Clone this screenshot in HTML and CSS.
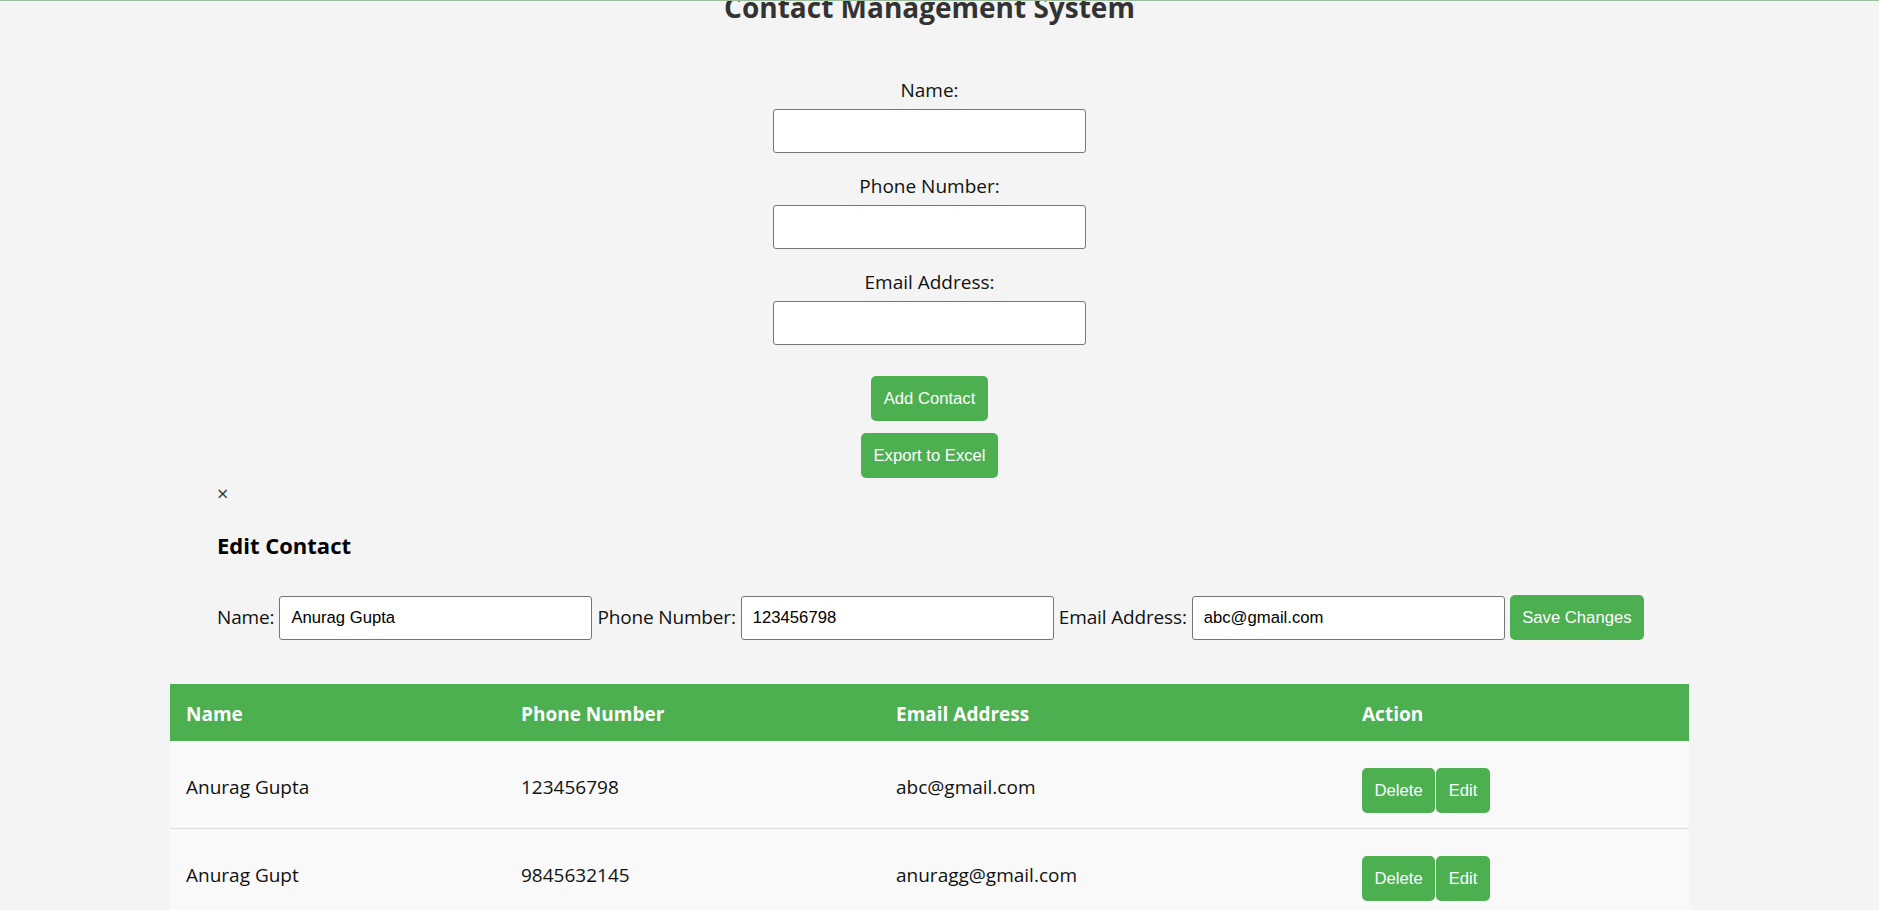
FILE: index.html
```html
<!DOCTYPE html>
<html lang="en">
<head>
<meta charset="UTF-8">
<title>Contact Management System</title>
<link rel="stylesheet" href="styles.css">
</head>
<body>
<div class="page">
  <h1 class="title">Contact Management System</h1>

  <form class="add-form">
    <div class="field">
      <label class="field-label" for="name">Name:</label>
      <input class="text-input" type="text" id="name">
    </div>
    <div class="field">
      <label class="field-label" for="phone">Phone Number:</label>
      <input class="text-input" type="text" id="phone">
    </div>
    <div class="field">
      <label class="field-label" for="email">Email Address:</label>
      <input class="text-input" type="text" id="email">
    </div>
    <div class="form-buttons">
      <button type="button" class="btn">Add Contact</button>
      <button type="button" class="btn">Export to Excel</button>
    </div>
  </form>

  <div class="modal">
    <span class="close">&times;</span>
    <h3 class="modal-title">Edit Contact</h3>
    <div class="edit-row">
      <label class="inline-label" for="edit-name">Name:</label>
      <input class="text-input" type="text" id="edit-name" value="Anurag Gupta">
      <label class="inline-label" for="edit-phone">Phone Number:</label>
      <input class="text-input" type="text" id="edit-phone" value="123456798">
      <label class="inline-label" for="edit-email">Email Address:</label>
      <input class="text-input" type="text" id="edit-email" value="abc@gmail.com">
      <button type="button" class="btn">Save Changes</button>
    </div>
  </div>

  <table class="contacts">
    <colgroup>
      <col class="col-name">
      <col class="col-phone">
      <col class="col-email">
      <col class="col-action">
    </colgroup>
    <thead>
      <tr>
        <th>Name</th>
        <th>Phone Number</th>
        <th>Email Address</th>
        <th>Action</th>
      </tr>
    </thead>
    <tbody>
      <tr>
        <td>Anurag Gupta</td>
        <td>123456798</td>
        <td>abc@gmail.com</td>
        <td class="action-cell"><div class="actions"><button type="button" class="btn">Delete</button><button type="button" class="btn">Edit</button></div></td>
      </tr>
      <tr>
        <td>Anurag Gupt</td>
        <td>9845632145</td>
        <td>anuragg@gmail.com</td>
        <td class="action-cell"><div class="actions"><button type="button" class="btn">Delete</button><button type="button" class="btn">Edit</button></div></td>
      </tr>
    </tbody>
  </table>
</div>
</body>
</html>
```
FILE: styles.css
```css
html, body {
  margin: 0;
  padding: 0;
}

body {
  background: #f4f4f4;
  font-family: "Open Sans", "Noto Sans", sans-serif;
  font-size: 19px;
  color: #111;
  border-top: 1px solid #9fbd9f;
  overflow: hidden;
  height: 909px;
}

.page {
  width: 1859px;
}

.title {
  margin: -18px 0 0;
  font-size: 28px;
  line-height: 48px;
  font-weight: 700;
  color: #333;
  text-align: center;
}

.add-form {
  display: flex;
  flex-direction: column;
  align-items: center;
  gap: 21px;
  margin-top: 47px;
}

.field {
  display: flex;
  flex-direction: column;
  align-items: center;
  gap: 6px;
}

.field-label {
  line-height: 25px;
}

.text-input {
  box-sizing: border-box;
  width: 313px;
  height: 44px;
  margin: 0;
  padding: 0 11px;
  border: 1px solid #767676;
  border-radius: 3px;
  background: #fff;
  font-family: "Liberation Sans", Arial, sans-serif;
  font-size: 16.67px;
  color: #000;
}

.form-buttons {
  display: flex;
  flex-direction: column;
  align-items: center;
  gap: 12px;
  margin-top: 10px;
}

.btn {
  margin: 0;
  padding: 12.5px;
  border: none;
  border-radius: 5px;
  background: #4caf50;
  color: #fff;
  font-family: "Liberation Sans", Arial, sans-serif;
  font-size: 16.67px;
  line-height: 20px;
  cursor: pointer;
}

.modal {
  width: 1519px;
  margin: 0 auto;
  padding-left: 47px;
  box-sizing: border-box;
}

.close {
  display: block;
  margin-top: 3px;
  line-height: 25px;
  font-size: 20px;
  color: #333;
}

.modal-title {
  margin: 24px 0 0;
  font-size: 22px;
  line-height: 30px;
  font-weight: 700;
  color: #000;
}

.edit-row {
  display: flex;
  align-items: center;
  gap: 5px;
  margin-top: 35px;
  height: 45px;
}

.inline-label {
  line-height: 25px;
  letter-spacing: -0.15px;
}

.contacts {
  width: 1519px;
  margin: 44px auto 0;
  border-collapse: collapse;
  table-layout: fixed;
}

.col-name { width: 335px; }
.col-phone { width: 375px; }
.col-email { width: 466px; }
.col-action { width: 343px; }

.contacts th {
  box-sizing: border-box;
  height: 57px;
  padding: 3px 16px 0;
  background: #4caf50;
  color: #fff;
  font-weight: 700;
  text-align: left;
  line-height: 25px;
}

.contacts td {
  padding: 18px 16px 12px;
  background: #f9f9f9;
  border-bottom: 1px solid #ddd;
  vertical-align: middle;
  line-height: 25px;
}

.contacts td.action-cell {
  padding: 15px 16px;
}

.actions {
  display: flex;
  gap: 1px;
  margin-top: 12px;
}
```
